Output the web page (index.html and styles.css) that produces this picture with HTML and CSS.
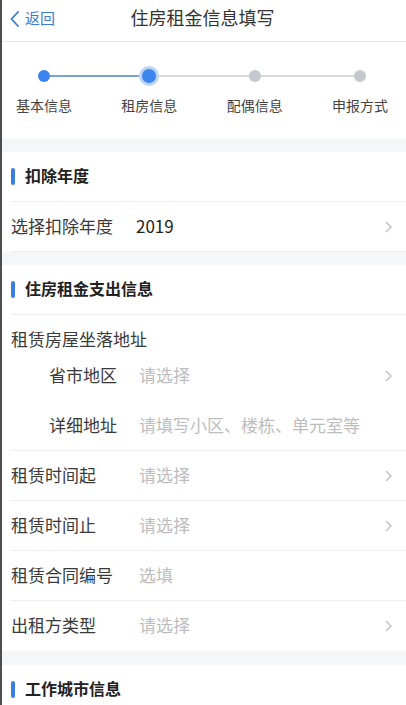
FILE: index.html
```html
<!DOCTYPE html>
<html lang="zh-CN">
<head>
  <meta charset="UTF-8">
  <meta name="viewport" content="width=device-width, initial-scale=1.0">
  <title>住房租金信息填写</title>
  <link rel="stylesheet" href="styles.css">
</head>
<body>
  <div class="page">
    <div class="header">
      <a class="back" href="#">
        <svg width="9" height="16" viewBox="0 0 9 16"><path d="M8 1 L1.5 8 L8 15" fill="none" stroke="#3a7bd5" stroke-width="1.8" stroke-linecap="round" stroke-linejoin="round"/></svg>
        <span>返回</span>
      </a>
      <div class="title">住房租金信息填写</div>
      <div></div>
    </div>

    <div class="steps">
      <div class="dots">
        <span class="dot done"></span>
        <span class="line done" style="width: 89px"></span>
        <span class="dot current"><span></span></span>
        <span class="line" style="width: 90px"></span>
        <span class="dot"></span>
        <span class="line" style="width: 93px"></span>
        <span class="dot"></span>
      </div>
      <div class="labels">
        <span>基本信息</span>
        <span>租房信息</span>
        <span>配偶信息</span>
        <span>申报方式</span>
      </div>
    </div>

    <div class="band"></div>
    <div class="section-title"><i></i>扣除年度</div>
    <div class="row">
      <span class="label">选择扣除年度</span>
      <span class="value">2019</span>
      <svg class="arrow" width="7" height="12" viewBox="0 0 7 12"><path d="M1 1 L6 6 L1 11" fill="none" stroke="#c4c4c4" stroke-width="1.5"/></svg>
    </div>

    <div class="band short"></div>
    <div class="section-title"><i></i>住房租金支出信息</div>
    <div class="address">
      <div class="address-label">租赁房屋坐落地址</div>
      <div class="row sub">
        <span class="label">省市地区</span>
        <span class="value empty">请选择</span>
        <svg class="arrow" width="7" height="12" viewBox="0 0 7 12"><path d="M1 1 L6 6 L1 11" fill="none" stroke="#c4c4c4" stroke-width="1.5"/></svg>
      </div>
      <div class="row sub">
        <span class="label">详细地址</span>
        <span class="value empty">请填写小区、楼栋、单元室等</span>
      </div>
    </div>
    <div class="row">
      <span class="label">租赁时间起</span>
      <span class="value empty">请选择</span>
      <svg class="arrow" width="7" height="12" viewBox="0 0 7 12"><path d="M1 1 L6 6 L1 11" fill="none" stroke="#c4c4c4" stroke-width="1.5"/></svg>
    </div>
    <div class="row">
      <span class="label">租赁时间止</span>
      <span class="value empty">请选择</span>
      <svg class="arrow" width="7" height="12" viewBox="0 0 7 12"><path d="M1 1 L6 6 L1 11" fill="none" stroke="#c4c4c4" stroke-width="1.5"/></svg>
    </div>
    <div class="row">
      <span class="label">租赁合同编号</span>
      <span class="value empty">选填</span>
    </div>
    <div class="row last">
      <span class="label">出租方类型</span>
      <span class="value empty">请选择</span>
      <svg class="arrow" width="7" height="12" viewBox="0 0 7 12"><path d="M1 1 L6 6 L1 11" fill="none" stroke="#c4c4c4" stroke-width="1.5"/></svg>
    </div>

    <div class="band"></div>
    <div class="section-title"><i></i>工作城市信息</div>
  </div>
</body>
</html>
```

FILE: styles.css
```css
body {
  margin: 0;
  font-family: "Noto Sans CJK SC", "Noto Sans", sans-serif;
  background: #fff;
  color: #333;
}
.page {
  border-left: 2px solid #4d4d4d;
  min-height: 705px;
  box-sizing: border-box;
  overflow: hidden;
}
.header {
  display: grid;
  grid-template-columns: 1fr auto 1fr;
  align-items: center;
  height: 42px;
  box-sizing: border-box;
  padding-bottom: 7px;
  border-bottom: 1px solid #e8e8e8;
}
.back {
  display: flex;
  align-items: center;
  gap: 6px;
  padding-left: 8px;
  color: #3a7bd5;
  font-size: 15px;
  text-decoration: none;
}
.back svg {
  margin-top: 3px;
}
.title {
  font-size: 18px;
  color: #333;
  padding-right: 3px;
}
.steps {
  padding: 24px 0 23px;
}
.dots {
  display: flex;
  align-items: center;
  height: 20px;
  padding-left: 36px;
}
.dot {
  width: 12px;
  height: 12px;
  border-radius: 50%;
  background: #c6c7cf;
  flex: none;
}
.dot.done {
  background: #3d85ee;
}
.dot.current {
  width: 20px;
  height: 20px;
  background: #bcd4f5;
  display: flex;
  align-items: center;
  justify-content: center;
}
.dot.current span {
  width: 14px;
  height: 14px;
  border-radius: 50%;
  background: #3d85ee;
}
.line {
  height: 2px;
  background: #d8d8dd;
  flex: none;
}
.line.done {
  background: #7b9fd8;
}
.labels {
  display: flex;
  justify-content: space-between;
  margin-top: 9px;
  padding: 0 18px 0 14px;
  font-size: 14px;
  line-height: 20px;
  color: #444;
}
.labels span {
  width: 56px;
  text-align: center;
}
.band {
  height: 14px;
  background: #f5f6f8;
}
.band.short {
  height: 13px;
}
.section-title {
  display: flex;
  align-items: center;
  height: 50px;
  box-sizing: border-box;
  padding-bottom: 4px;
  margin-left: 9px;
  border-bottom: 1px solid #efefef;
  font-size: 16px;
  font-weight: bold;
  color: #222;
}
.section-title i {
  width: 4px;
  height: 17px;
  border-radius: 2px;
  background: #3b7ee0;
  margin: 4px 10px 0 0;
}
.row {
  display: flex;
  align-items: center;
  height: 50px;
  box-sizing: border-box;
  padding: 0 0 3px 1px;
  margin-left: 8px;
  border-bottom: 1px solid #efefef;
  font-size: 17px;
}
.row.last {
  border-bottom: none;
}
.label {
  width: 125px;
  flex: none;
  color: #3a3a3a;
}
.value {
  flex: 1;
  color: #222;
}
.value.empty {
  color: #bdbdbd;
  padding-left: 3px;
}
.arrow {
  margin: 3px 14px 0 0;
  flex: none;
}
.address {
  margin-left: 8px;
  border-bottom: 1px solid #efefef;
}
.address-label {
  padding: 13px 0 0 1px;
  line-height: 22px;
  font-size: 17px;
  color: #3a3a3a;
}
.row.sub {
  height: 50px;
  margin-left: 0;
  padding-bottom: 1px;
  border-bottom: none;
}
.row.sub .label {
  padding-left: 38px;
  width: 87px;
}
```
